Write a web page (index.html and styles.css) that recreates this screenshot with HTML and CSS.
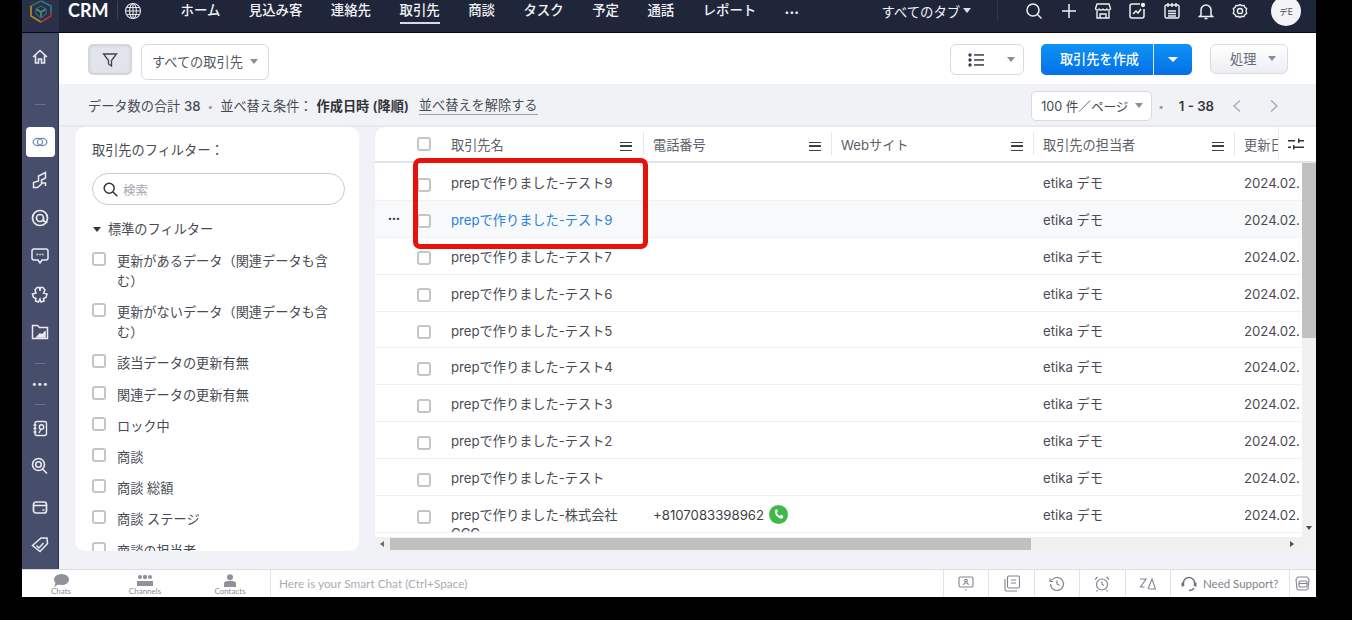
FILE: index.html
```html
<!DOCTYPE html>
<html lang="ja">
<head>
  <meta charset="UTF-8">
  <title>取引先 - CRM</title>
  <link rel="stylesheet" href="styles.css">
</head>
<body>
  <div class="app">
    <!-- top nav -->
    <header class="topnav">
      <div class="logo">
        <svg width="24" height="24" viewBox="0 0 24 24" fill="none" stroke-width="1.6">
          <path d="M12 1 L22 6 V12" stroke="#2f7d8c"/>
          <path d="M12 1 L2 6 V12" stroke="#3a6f4a"/>
          <path d="M2 6 V16 L12 22" stroke="#b58a2a"/>
          <path d="M22 12 V16 L12 22" stroke="#a83a3a"/>
          <path d="M7 9 L12 12 L17 9 M12 12 V18" stroke="#4c9a57"/>
          <path d="M7 9 L12 6 L17 9 V14 L12 18 L7 14 Z" stroke="#37608f" stroke-width="1.2"/>
        </svg>
      </div>
      <span class="brand">CRM</span>
      <span class="brand-line"></span>
      <svg class="globe" width="18" height="18" viewBox="0 0 18 18" fill="none" stroke="#e4e6ec" stroke-width="1.1">
        <circle cx="9" cy="9" r="7.5"/><ellipse cx="9" cy="9" rx="3.4" ry="7.5"/>
        <path d="M1.5 9h15M2.5 5.5h13M2.5 12.5h13M9 1.5v15"/>
      </svg>
      <nav class="tabs">
        <a>ホーム</a>
        <a>見込み客</a>
        <a>連絡先</a>
        <a class="tab-on">取引先</a>
        <a>商談</a>
        <a>タスク</a>
        <a>予定</a>
        <a>通話</a>
        <a>レポート</a>
        <a class="tab-more">•••</a>
      </nav>
      <div class="all-tabs">すべてのタブ<i class="caret caret-light"></i></div>
      <div class="nav-icons">
        <svg width="18" height="18" viewBox="0 0 18 18" fill="none" stroke="#f0f1f5" stroke-width="1.5"><circle cx="8" cy="8" r="6"/><path d="M12.5 12.5l4 4"/></svg>
        <svg width="18" height="18" viewBox="0 0 18 18" fill="none" stroke="#f0f1f5" stroke-width="1.5"><path d="M9 2v14M2 9h14"/></svg>
        <svg width="18" height="18" viewBox="0 0 18 18" fill="none" stroke="#f0f1f5" stroke-width="1.4"><path d="M3 2h12l1.5 4.5a2 2 0 0 1-3.700 .6 2.400 2.400 0 0 1-3.800 0 2.400 2.400 0 0 1-3.800 0A2 2 0 0 1 1.500 6.500z"/><path d="M3 9v7h12V9M6 16v-4h6v4"/></svg>
        <svg width="18" height="18" viewBox="0 0 18 18" fill="none" stroke="#f0f1f5" stroke-width="1.5"><path d="M12 2H4a2 2 0 0 0-2 2v10a2 2 0 0 0 2 2h10a2 2 0 0 0 2-2V7"/><path d="M5 12l3-3 2 2 3-4"/><circle cx="15" cy="3" r="1.400" fill="#f0f1f5"/></svg>
        <svg width="18" height="18" viewBox="0 0 18 18" fill="none" stroke="#f0f1f5" stroke-width="1.4"><rect x="2" y="3" width="14" height="13" rx="1.500"/><path d="M5 1v4M9 1v4M13 1v4M5 9h8M5 11.500h8M5 14h8"/></svg>
        <svg width="18" height="18" viewBox="0 0 18 18" fill="none" stroke="#f0f1f5" stroke-width="1.5"><path d="M4 13V8a5 5 0 0 1 10 0v5l1.500 1.500h-13zM7.500 16.500h3"/></svg>
        <svg width="18" height="18" viewBox="0 0 18 18" fill="none" stroke="#f0f1f5" stroke-width="1.5"><path d="M9 1.800l2 1.300 2.400-.3 1 2.200 2 1.300-.7 2.700.7 2.700-2 1.300-1 2.200-2.400-.3-2 1.300-2-1.300-2.400.3-1-2.200-2-1.300.7-2.700-.7-2.700 2-1.300 1-2.200 2.400.3z" transform="translate(.9 .9) scale(.9)"/><circle cx="9" cy="9" r="2.600"/></svg>
      </div>
      <div class="avatar">デE</div>
    </header>

    <div class="middle">
      <!-- left icon bar -->
      <aside class="sidebar">
        <div class="sb-item">
          <svg width="18" height="18" viewBox="0 0 18 18" fill="none" stroke="#e9ebf1" stroke-width="1.6"><path d="M2 9l7-6.500L16 9M4.500 7.500V15h3v-4h3v4h3V7.500"/></svg>
        </div>
        <div class="sb-sep sb-sep-top"></div>
        <div class="sb-item sb-active">
          <svg width="16" height="12" viewBox="0 0 18 14" fill="none" stroke="#6f8fb8" stroke-width="1.500"><ellipse cx="6.500" cy="7" rx="5.500" ry="4.300"/><ellipse cx="11.500" cy="7" rx="5.500" ry="4.300"/></svg>
        </div>
        <div class="sb-item">
          <svg width="16" height="18" viewBox="0 0 16 18" fill="none" stroke="#e9ebf1" stroke-width="1.500"><path d="M1.500 16.500v-5l5-1.500V5l7-3.500V7l-4 2v4l-4 3.500z"/><path d="M9.500 12h4v3"/></svg>
        </div>
        <div class="sb-item">
          <svg width="18" height="18" viewBox="0 0 18 18" fill="none" stroke="#e9ebf1" stroke-width="1.700"><circle cx="9" cy="9" r="7.500"/><circle cx="9" cy="9" r="3.500"/><path d="M12.500 9.500v2.500l4 1.500"/></svg>
        </div>
        <div class="sb-item">
          <svg width="18" height="18" viewBox="0 0 18 18" fill="none" stroke="#e9ebf1" stroke-width="1.500"><path d="M3 2h12a2 2 0 0 1 2 2v7a2 2 0 0 1-2 2h-4l-2 3-2-3H3a2 2 0 0 1-2-2V4a2 2 0 0 1 2-2z"/><path d="M5.500 7.500h1.500M8.300 7.500h1.500M11 7.500h1.500"/></svg>
        </div>
        <div class="sb-item">
          <svg width="18" height="18" viewBox="0 0 18 18" fill="none" stroke="#e9ebf1" stroke-width="1.500"><path d="M6 2.500h2.500L9 6l.5-3.500H12l2 2.500-1.500 3 3.500 1-1 3.500-2.500 1 .5 2.500-3 1L9 14l-1.500 3-3-1 .5-2.500-2.500-1-1-3.500 3.500-1L4 5z"/></svg>
        </div>
        <div class="sb-item">
          <svg width="18" height="16" viewBox="0 0 18 16" fill="none" stroke="#e9ebf1" stroke-width="1.500"><path d="M1.500 14.500V1.500h5l2 2h8v11z"/><path d="M6 13l3-3 2 1 3-3v5z" fill="#e9ebf1"/></svg>
        </div>
        <div class="sb-sep"></div>
        <div class="sb-dots">•••</div>
        <div class="sb-sep sb-sep-low"></div>
        <div class="sb-item">
          <svg width="15" height="17" viewBox="0 0 15 17" fill="none" stroke="#e9ebf1" stroke-width="1.400"><rect x="2" y="1.500" width="11.500" height="14" rx="2"/><path d="M.5 5h3M.5 8.500h3M.5 12h3"/><circle cx="8.500" cy="7" r="2.200"/><path d="M6 13l2-4"/></svg>
        </div>
        <div class="sb-item">
          <svg width="18" height="18" viewBox="0 0 18 18" fill="none" stroke="#e9ebf1" stroke-width="1.600"><circle cx="7.500" cy="7.500" r="6"/><circle cx="7.500" cy="7.500" r="2.800"/><path d="M11.500 12l4.500 4.500"/></svg>
        </div>
        <div class="sb-item sb-item-gap">
          <svg width="16" height="15" viewBox="0 0 16 15" fill="none" stroke="#e9ebf1" stroke-width="1.700"><rect x="1.500" y="2" width="13" height="11" rx="2.500"/><path d="M2 5.500h12M10.500 10h2"/></svg>
        </div>
        <div class="sb-item">
          <svg width="18" height="16" viewBox="0 0 18 16" fill="none" stroke="#e9ebf1" stroke-width="1.500"><path d="M1.500 8.500L10 1h6l.5 5.500L9 14.500z"/><path d="M5.500 8.500L8 11l4.500-5"/></svg>
        </div>
      </aside>

      <main class="content">
        <div class="toolbar">
          <button class="filter-btn">
            <svg width="16" height="16" viewBox="0 0 16 16" fill="none" stroke="#3e4352" stroke-width="1.300"><path d="M1.500 2h13L9.500 8.500V14l-3-2V8.500z"/></svg>
          </button>
          <button class="view-select">すべての取引先<i class="caret"></i></button>
          <div class="toolbar-right">
            <button class="list-btn">
              <svg width="16" height="14" viewBox="0 0 16 14" fill="#3a3f4c"><circle cx="2" cy="2" r="1.700"/><circle cx="2" cy="7" r="1.700"/><circle cx="2" cy="12" r="1.700"/><rect x="6" y="1.200" width="10" height="1.500"/><rect x="6" y="6.200" width="10" height="1.500"/><rect x="6" y="11.200" width="10" height="1.500"/></svg>
              <i class="caret"></i>
            </button>
            <div class="create-btn">
              <span class="create-label">取引先を作成</span>
              <span class="create-drop"><i class="caret caret-white"></i></span>
            </div>
            <button class="action-btn">処理<i class="caret"></i></button>
          </div>
        </div>

        <div class="subbar">
          <span>データ数の合計 <span class="num">38</span></span>
          <span class="dot">•</span>
          <span>並べ替え条件：<b class="sort-val">作成日時 (降順)</b></span>
          <a class="clear-sort">並べ替えを解除する</a>
          <div class="pager">
            <button class="per-page">100 件／ページ<i class="caret"></i></button>
            <span class="dot">•</span>
            <b class="page-range">1 - 38</b>
            <svg class="page-prev" width="10" height="14" viewBox="0 0 10 14" fill="none" stroke="#a9adb8" stroke-width="1.500"><path d="M8 1.500L2 7l6 5.500"/></svg>
            <svg class="page-next" width="10" height="14" viewBox="0 0 10 14" fill="none" stroke="#a9adb8" stroke-width="1.500"><path d="M2 1.500L8 7l-6 5.500"/></svg>
          </div>
        </div>

        <div class="panels">
          <!-- filters -->
          <section class="filters">
            <h3 class="filters-title">取引先のフィルター：</h3>
            <div class="search">
              <svg width="15" height="15" viewBox="0 0 15 15" fill="none" stroke="#333" stroke-width="1.500"><circle cx="6.200" cy="6.200" r="5"/><path d="M10 10l4.300 4.300"/></svg>
              <span>検索</span>
            </div>
            <div class="filter-group"><i class="caret caret-dark"></i>標準のフィルター</div>
            <label class="filter-item"><i class="check"></i><span>更新があるデータ（関連データも含む）</span></label>
            <label class="filter-item"><i class="check"></i><span>更新がないデータ（関連データも含む）</span></label>
            <label class="filter-item"><i class="check"></i><span>該当データの更新有無</span></label>
            <label class="filter-item"><i class="check"></i><span>関連データの更新有無</span></label>
            <label class="filter-item"><i class="check"></i><span>ロック中</span></label>
            <label class="filter-item"><i class="check"></i><span>商談</span></label>
            <label class="filter-item"><i class="check"></i><span>商談 総額</span></label>
            <label class="filter-item"><i class="check"></i><span>商談 ステージ</span></label>
            <label class="filter-item"><i class="check"></i><span>商談の担当者</span></label>
          </section>

          <!-- table -->
          <section class="table-panel">
            <div class="thead">
              <div class="th th-check"><i class="check"></i></div>
              <div class="th th-name">取引先名<i class="menu"></i></div>
              <div class="th">電話番号<i class="menu"></i></div>
              <div class="th">Webサイト<i class="menu"></i></div>
              <div class="th">取引先の担当者<i class="menu"></i></div>
              <div class="th th-last">更新日</div>
              <div class="th-settings">
                <svg width="16" height="12" viewBox="0 0 16 12" fill="#333"><rect x="0" y="2" width="7" height="1.500"/><rect x="10" y="0.500" width="1.500" height="4.500"/><rect x="10" y="2" width="6" height="1.500"/><rect x="0" y="8.500" width="3" height="1.500"/><rect x="5" y="7" width="1.500" height="4.500"/><rect x="5" y="8.500" width="11" height="1.500"/></svg>
              </div>
            </div>
            <div class="tbody-wrap">
              <div class="tbody-col">
                <div class="tbody">
                  <div class="row"><div class="td-check"><i class="check"></i></div><div class="td td-name">prepで作りました-テスト9</div><div class="td"></div><div class="td"></div><div class="td">etika デモ</div><div class="td">2024.02.</div></div>
                  <div class="row row-hover"><div class="td-check"><span class="row-more">•••</span><i class="check"></i></div><div class="td td-name td-link">prepで作りました-テスト9</div><div class="td"></div><div class="td"></div><div class="td">etika デモ</div><div class="td">2024.02.</div></div>
                  <div class="row"><div class="td-check"><i class="check"></i></div><div class="td td-name">prepで作りました-テスト7</div><div class="td"></div><div class="td"></div><div class="td">etika デモ</div><div class="td">2024.02.</div></div>
                  <div class="row"><div class="td-check"><i class="check"></i></div><div class="td td-name">prepで作りました-テスト6</div><div class="td"></div><div class="td"></div><div class="td">etika デモ</div><div class="td">2024.02.</div></div>
                  <div class="row"><div class="td-check"><i class="check"></i></div><div class="td td-name">prepで作りました-テスト5</div><div class="td"></div><div class="td"></div><div class="td">etika デモ</div><div class="td">2024.02.</div></div>
                  <div class="row"><div class="td-check"><i class="check"></i></div><div class="td td-name">prepで作りました-テスト4</div><div class="td"></div><div class="td"></div><div class="td">etika デモ</div><div class="td">2024.02.</div></div>
                  <div class="row"><div class="td-check"><i class="check"></i></div><div class="td td-name">prepで作りました-テスト3</div><div class="td"></div><div class="td"></div><div class="td">etika デモ</div><div class="td">2024.02.</div></div>
                  <div class="row"><div class="td-check"><i class="check"></i></div><div class="td td-name">prepで作りました-テスト2</div><div class="td"></div><div class="td"></div><div class="td">etika デモ</div><div class="td">2024.02.</div></div>
                  <div class="row"><div class="td-check"><i class="check"></i></div><div class="td td-name">prepで作りました-テスト</div><div class="td"></div><div class="td"></div><div class="td">etika デモ</div><div class="td">2024.02.</div></div>
                  <div class="row"><div class="td-check"><i class="check"></i></div><div class="td td-name">prepで作りました-株式会社CCC</div><div class="td td-phone">+8107083398962
                    <svg width="19" height="19" viewBox="0 0 19 19"><circle cx="9.500" cy="9.500" r="9.500" fill="#3fb94a"/><path d="M6.200 4.500l1.800-.3 1 2.600-1.200 1c.5 1.300 1.600 2.500 3 3.100l1-1.200 2.500 1.100-.4 1.900c-.2.700-1 1-1.800.9-3.200-.6-5.700-3.200-6.100-6.300-.1-1 .1-2.500.7-2.800z" fill="#fff"/></svg>
                  </div><div class="td"></div><div class="td">etika デモ</div><div class="td">2024.02.</div></div>
                </div>
                <div class="hscroll">
                  <i class="arrow-left"></i>
                  <div class="hscroll-thumb"></div>
                  <i class="arrow-right"></i>
                </div>
              </div>
              <div class="vscroll">
                <div class="vscroll-thumb"></div>
                <i class="arrow-down"></i>
              </div>
            </div>
            <div class="highlight"></div>
          </section>
        </div>
      </main>
    </div>

    <!-- smart chat bar -->
    <footer class="chatbar">
      <div class="chat-tab">
        <svg width="16" height="13" viewBox="0 0 16 13" fill="#8f929b"><ellipse cx="8.500" cy="5.500" rx="7.500" ry="5.500"/><path d="M3 8l-2 5 5-3z"/></svg>
        <span>Chats</span>
      </div>
      <div class="chat-tab">
        <svg width="16" height="13" viewBox="0 0 16 13" fill="#8f929b"><circle cx="3" cy="3" r="2"/><circle cx="13" cy="3" r="2"/><circle cx="8" cy="3" r="2.200"/><path d="M0 12V7h16v5z"/></svg>
        <span>Channels</span>
      </div>
      <div class="chat-tab">
        <svg width="14" height="13" viewBox="0 0 14 13" fill="#8f929b"><circle cx="7" cy="3.200" r="3"/><path d="M1 13V9.500C1 7.500 3.500 7 7 7s6 .5 6 2.500V13z"/></svg>
        <span>Contacts</span>
      </div>
      <div class="chat-input">Here is your Smart Chat (Ctrl+Space)</div>
      <div class="chat-tool">
        <svg width="16" height="15" viewBox="0 0 16 15" fill="none" stroke="#80848e" stroke-width="1.100"><rect x="1" y="1" width="14" height="10" rx="1.500"/><circle cx="8" cy="4.500" r="1.300"/><path d="M5.500 9l1-2h3l1 2M8 13v1.500"/></svg>
      </div>
      <div class="chat-tool">
        <svg width="16" height="17" viewBox="0 0 16 17" fill="none" stroke="#80848e" stroke-width="1.100"><rect x="3.500" y="1" width="12" height="12" rx="1.500"/><path d="M1 4v10.500a1.500 1.500 0 0 0 1.500 1.500H13M7 5h5M7 8h5"/></svg>
      </div>
      <div class="chat-tool">
        <svg width="16" height="16" viewBox="0 0 16 16" fill="none" stroke="#80848e" stroke-width="1.200"><path d="M2.500 4.500a6.500 6.500 0 1 1-1 3.500M1 2.500v3h3M8 4.500V8l2.500 1.500"/></svg>
      </div>
      <div class="chat-tool">
        <svg width="16" height="16" viewBox="0 0 16 16" fill="none" stroke="#80848e" stroke-width="1.200"><circle cx="8" cy="8.500" r="5.500"/><path d="M8 5.500v3l2 1M1 3.500L3.500 1M15 3.500L12.500 1M3.500 14l-1 1.500M12.500 14l1 1.500"/></svg>
      </div>
      <div class="chat-tool">
        <svg width="17" height="13" viewBox="0 0 17 13" fill="none" stroke="#80848e" stroke-width="1.100"><path d="M1 2h6L1.500 10h4M9 12l4-10 3.500 10H10"/></svg>
      </div>
      <div class="chat-support">
        <svg width="16" height="16" viewBox="0 0 16 16" fill="none" stroke="#6d717b" stroke-width="1.400"><path d="M2.500 10V7a5.500 5.500 0 0 1 11 0v3"/><path d="M1.500 6.500v4M14.500 6.500v4" stroke-width="2"/><path d="M13 12c-1 2-3 2.500-5 2.500"/></svg>
        <span>Need Support?</span>
      </div>
      <div class="chat-last">
        <svg width="15" height="15" viewBox="0 0 15 15" fill="none" stroke="#80848e" stroke-width="1.100"><path d="M1 3.500L3 1h9l2 2.500-1 9.500-2 1H4l-2-1z"/><rect x="4" y="5" width="8" height="6" rx="1"/><path d="M4 7.500h8"/></svg>
      </div>
    </footer>
  </div>
</body>
</html>
```

FILE: styles.css
```css
* {
  box-sizing: border-box;
  margin: 0;
}
html, body {
  height: 100%;
  background: #000;
  overflow: hidden;
}
body {
  padding-left: 22px;
  font-family: Inter, "Noto Sans CJK JP", sans-serif;
  font-size: 13.2px;
  color: #484b54;
}
button {
  font: inherit;
  color: inherit;
  padding: 0;
}
i {
  display: block;
  font-style: normal;
}
.app {
  width: 1294px;
  height: 597px;
  display: flex;
  flex-direction: column;
  overflow: hidden;
}

/* shared bits */
.caret {
  width: 0;
  height: 0;
  border-left: 4.5px solid transparent;
  border-right: 4.5px solid transparent;
  border-top: 5px solid #8b8e98;
}
.caret-light { border-top-color: #e0e2e9; }
.caret-white { border-top-color: #fff; border-left-width: 5.5px; border-right-width: 5.5px; }
.caret-dark { border-top-color: #33363f; border-left-width: 4px; border-right-width: 4px; }
.check {
  display: block;
  flex: none;
  width: 14px;
  height: 14px;
  border: 2px solid #c4c5c9;
  border-radius: 3px;
  background: #fff;
}
.menu {
  width: 12px;
  height: 9px;
  border-top: 1.5px solid #3c3f48;
  border-bottom: 1.5px solid #3c3f48;
  position: relative;
}
.menu::after {
  content: "";
  display: block;
  margin-top: 2.5px;
  height: 1.5px;
  background: #3c3f48;
}
.dot {
  color: #9a9da6;
  font-size: 10px;
}

/* top nav */
.topnav {
  height: 33px;
  flex: none;
  display: flex;
  background: #20263a;
  border-bottom: 1px solid #07080c;
  color: #f1f2f6;
}
.logo {
  width: 37px;
  background: #293048;
  display: flex;
  justify-content: center;
  padding-top: 0;
}
.brand {
  margin-left: 9px;
  font-family: Lato, sans-serif;
  font-weight: 700;
  font-size: 18px;
  line-height: 20px;
  color: #fff;
}
.brand-line {
  width: 1px;
  height: 18px;
  margin: 1px 6px 0 8px;
  background: #3c435a;
}
.globe {
  margin-top: 2px;
}
.tabs {
  display: flex;
  gap: 28.5px;
  margin-left: 39px;
  font-size: 13.4px;
  font-weight: 500;
  line-height: 21px;
}
.tabs a {
  position: relative;
  height: 24px;
}
.tab-on {
  border-bottom: 2px solid #d9dbe4;
}
.tab-more {
  font-size: 8px;
  letter-spacing: 0.6px;
  line-height: 25px;
}
.all-tabs {
  display: flex;
  align-items: center;
  gap: 3px;
  height: 21px;
  margin-left: 82px;
  width: 117px;
  border-right: 1px solid #2e3449;
  font-size: 13.4px;
}
.nav-icons {
  display: flex;
  gap: 16.3px;
  margin-left: 27px;
  padding-top: 2px;
}
.avatar {
  width: 30px;
  height: 30px;
  margin: -4px 0 0 22px;
  background: #f4f4f6;
  color: #4c4f58;
  border-radius: 50%;
  font-size: 8.5px;
  display: flex;
  align-items: center;
  justify-content: center;
}

/* left icon bar */
.middle {
  flex: 1;
  display: flex;
  min-height: 0;
}
.sidebar {
  width: 37px;
  flex: none;
  background: #464e6c;
  border-right: 1px solid #2c3149;
  padding-top: 5px;
  display: flex;
  flex-direction: column;
  align-items: center;
}
.sb-item {
  width: 100%;
  height: 38px;
  flex: none;
  display: flex;
  align-items: center;
  justify-content: center;
}
.sb-item-gap {
  margin-top: 3px;
}
.sb-active {
  width: 29px;
  height: 30px;
  margin: 4px 0;
  background: #fff;
  border-radius: 4px;
}
.sb-sep {
  height: 24px;
  flex: none;
  width: 100%;
  display: flex;
  align-items: center;
  justify-content: center;
}
.sb-sep::after {
  content: "";
  width: 11px;
  height: 1px;
  background: #687091;
}
.sb-sep-top {
  height: 47px;
  padding-top: 9px;
}
.sb-sep-low {
  height: 16px;
  padding-top: 6px;
}
.sb-dots {
  height: 18px;
  flex: none;
  color: #eef0f5;
  font-size: 9px;
  line-height: 18px;
  letter-spacing: 0.5px;
}

/* main */
.content {
  flex: 1;
  display: flex;
  flex-direction: column;
  min-width: 0;
  background: #f0f2f6;
  border-top: 0;
}
.toolbar {
  height: 51px;
  flex: none;
  background: #fff;
  display: flex;
  align-items: flex-start;
  padding: 11px 28px 0 29px;
}
.filter-btn {
  width: 44px;
  height: 31px;
  background: #e1e4ea;
  border: 1px solid #d4d7de;
  border-radius: 5px;
  box-shadow: inset 0 0 3px #b9bcc5;
  display: flex;
  align-items: center;
  justify-content: center;
}
.view-select {
  width: 128px;
  height: 36px;
  margin-left: 9px;
  background: #fff;
  border: 1px solid #d8dae1;
  border-radius: 6px;
  display: flex;
  align-items: center;
  gap: 7px;
  padding: 0 0 2px 10px;
  color: #555861;
}
.toolbar-right {
  margin-left: auto;
  display: flex;
  align-items: flex-start;
}
.list-btn {
  width: 74px;
  height: 31px;
  background: #fff;
  border: 1px solid #d8dae1;
  border-radius: 6px;
  display: flex;
  align-items: center;
  padding-left: 17px;
  gap: 23px;
}
.create-btn {
  width: 151px;
  height: 31px;
  margin-left: 17px;
  display: flex;
  border-radius: 5px;
  overflow: hidden;
  color: #fff;
  font-weight: 500;
  background: linear-gradient(#0d93f7, #0570e6);
}
.create-label {
  width: 113px;
  border-right: 1px solid #d5e9fb;
  display: flex;
  align-items: center;
  justify-content: center;
  padding: 0 0 3px 5px;
}
.create-drop {
  flex: 1;
  display: flex;
  align-items: center;
  justify-content: center;
}
.action-btn {
  width: 78px;
  height: 30px;
  margin-left: 18px;
  background: linear-gradient(#fff, #eceef4);
  border: 1px solid #dadce3;
  border-radius: 6px;
  display: flex;
  align-items: center;
  gap: 12px;
  padding: 0 0 2px 19px;
  color: #666973;
}
.subbar {
  height: 43px;
  flex: none;
  display: flex;
  align-items: center;
  gap: 7px;
  padding: 2px 28px 0 29px;
  border-bottom: 2px solid #e7e9f0;
  white-space: nowrap;
}
.num {
  font-weight: 500;
}
.sort-val {
  margin-left: 4px;
  font-weight: 600;
  color: #2f3139;
}
.clear-sort {
  margin-left: 3px;
  border-bottom: 1px solid #9fa2ab;
  line-height: 17px;
}
.pager {
  margin-left: auto;
  display: flex;
  align-items: center;
  margin-right: 9px;
}
.per-page {
  width: 121px;
  height: 30px;
  background: #fff;
  border: 1px solid #d8dae1;
  border-radius: 5px;
  display: flex;
  align-items: center;
  gap: 7px;
  padding-left: 9px;
  color: #44474f;
  font-size: 12.6px;
}
.pager .dot {
  margin: 0 15px 0 6px;
}
.page-range {
  font-weight: 600;
  color: #33353d;
}
.page-prev {
  margin-left: 18px;
}
.page-next {
  margin-left: 27px;
}
.panels {
  flex: 1;
  display: flex;
  gap: 16px;
  min-height: 0;
  padding: 0 0 18px 16px;
}

/* filters */
.filters {
  width: 284px;
  flex: none;
  background: #fff;
  border-radius: 10px;
  padding: 14px 14px 0 17px;
  overflow: hidden;
}
.filters-title {
  font-size: 13.2px;
  font-weight: 400;
  line-height: 18px;
}
.search {
  width: 253px;
  height: 32px;
  margin-top: 14px;
  border: 1px solid #c9cbd2;
  border-radius: 16px;
  display: flex;
  align-items: center;
  gap: 5px;
  padding-left: 10px;
  color: #a6a8b0;
  font-size: 12.5px;
}
.filter-group {
  display: flex;
  align-items: center;
  gap: 7px;
  margin: 14px 0 12px 1px;
  line-height: 20px;
}
.filter-item {
  display: flex;
  gap: 11px;
  width: 244px;
  line-height: 20px;
  margin-bottom: 11.2px;
}
.filter-item .check {
  margin-top: 1px;
}

/* table */
.table-panel {
  flex: 1;
  min-width: 0;
  position: relative;
  background: #fff;
  border-radius: 10px 0 10px 10px;
  display: flex;
  flex-direction: column;
  overflow: hidden;
}
.thead, .row {
  display: grid;
  grid-template-columns: 76px 192px 188px 202px 201px 1fr;
}
.thead {
  position: relative;
  height: 36px;
  flex: none;
  border-bottom: 2px solid #dfe6ee;
  color: #5d6069;
}
.th {
  display: flex;
  align-items: center;
  justify-content: space-between;
  height: 34px;
  padding: 0 10px;
  white-space: nowrap;
}
.th + .th {
  border-left: 0;
  position: relative;
}
.th:not(.th-check):not(.th-name)::before {
  content: "";
  position: absolute;
  left: 0;
  top: 5px;
  height: 23px;
  width: 1px;
  background: #e4e6eb;
}
.th .menu {
  margin-top: 4px;
}
.th-check {
  padding-left: 42px;
}
.th-name {
  padding: 0 11px 0 0;
}
.th-last {
  overflow: hidden;
}
.th-settings {
  position: absolute;
  right: 0;
  top: 0;
  width: 38px;
  height: 34px;
  background: #fff;
  border-left: 1px solid #eceef1;
  display: flex;
  align-items: center;
  justify-content: center;
  padding-right: 3px;
}
.tbody-wrap {
  flex: 1;
  display: flex;
  min-height: 0;
}
.tbody-col {
  flex: 1;
  min-width: 0;
  display: flex;
  flex-direction: column;
}
.tbody {
  flex: 1;
  min-height: 0;
  overflow: hidden;
  padding-top: 1px;
}
.row {
  height: 36.9px;
  border-bottom: 1px solid #f0f1f4;
  line-height: 20px;
}
.row-hover {
  background: #f8f9fb;
}
.td-check {
  position: relative;
  display: flex;
  align-items: center;
  height: 36px;
  padding: 5px 0 0 42px;
}
.row-more {
  position: absolute;
  left: 13px;
  top: 8px;
  font-size: 7px;
  color: #30323a;
}
.td {
  padding: 9px 10px 0;
  overflow: hidden;
  white-space: nowrap;
}
.td-name {
  padding: 10px 24px 0 0;
  line-height: 18px;
  white-space: normal;
}
.td-link {
  color: #2b83d8;
}
.td-phone {
  display: flex;
  align-items: flex-start;
  gap: 5px;
  color: #3c3f47;
}
.hscroll {
  height: 14px;
  flex: none;
  background: #f1f1f1;
  display: flex;
  align-items: center;
  position: relative;
}
.hscroll-thumb {
  width: 641px;
  height: 12px;
  margin-left: 15px;
  background: #c1c1c1;
}
.arrow-left, .arrow-right {
  position: absolute;
  width: 0;
  height: 0;
  border-top: 3.5px solid transparent;
  border-bottom: 3.5px solid transparent;
}
.arrow-left {
  left: 5px;
  border-right: 4px solid #6d6d6d;
}
.arrow-right {
  right: 8px;
  border-left: 4px solid #505050;
}
.vscroll {
  width: 14px;
  flex: none;
  background: #f1f1f1;
  position: relative;
}
.vscroll-thumb {
  height: 175px;
  background: #c1c1c1;
}
.arrow-down {
  position: absolute;
  left: 4px;
  bottom: 21px;
  width: 0;
  height: 0;
  border-left: 3.5px solid transparent;
  border-right: 3.5px solid transparent;
  border-top: 4px solid #505050;
}
/* red box drawn over the first two rows */
.highlight {
  position: absolute;
  left: 38px;
  top: 31px;
  width: 235px;
  height: 91px;
  border: 5px solid #e8120c;
  border-radius: 7px;
  pointer-events: none;
}

/* chat bar */
.chatbar {
  height: 28px;
  flex: none;
  background: #fff;
  border-top: 1px solid #dcdde1;
  display: flex;
  color: #9a9ca4;
}
.chat-tab {
  display: flex;
  flex-direction: column;
  align-items: center;
  padding-top: 4px;
  font-family: Lato, sans-serif;
  font-size: 8px;
  line-height: 9px;
  color: #8c8e96;
}
.chat-tab:first-child {
  width: 78px;
}
.chat-tab:nth-child(2) {
  width: 90px;
}
.chat-tab:nth-child(3) {
  width: 81px;
  border-right: 1px solid #e3e4e8;
}
.chat-input {
  width: 672px;
  padding-left: 8px;
  font-family: Lato, sans-serif;
  font-size: 11.8px;
  line-height: 27px;
  color: #aaacb3;
  white-space: nowrap;
}
.chat-tool {
  width: 45.4px;
  border-left: 1px solid #e3e4e8;
  display: flex;
  align-items: center;
  justify-content: center;
}
.chat-support {
  width: 119px;
  border-left: 1px solid #e3e4e8;
  display: flex;
  align-items: center;
  gap: 6px;
  padding-left: 10px;
  font-family: Lato, sans-serif;
  font-size: 11.5px;
  color: #80838c;
  white-space: nowrap;
}
.chat-last {
  flex: 1;
  border-left: 1px solid #e3e4e8;
  display: flex;
  align-items: center;
  justify-content: center;
}
```
